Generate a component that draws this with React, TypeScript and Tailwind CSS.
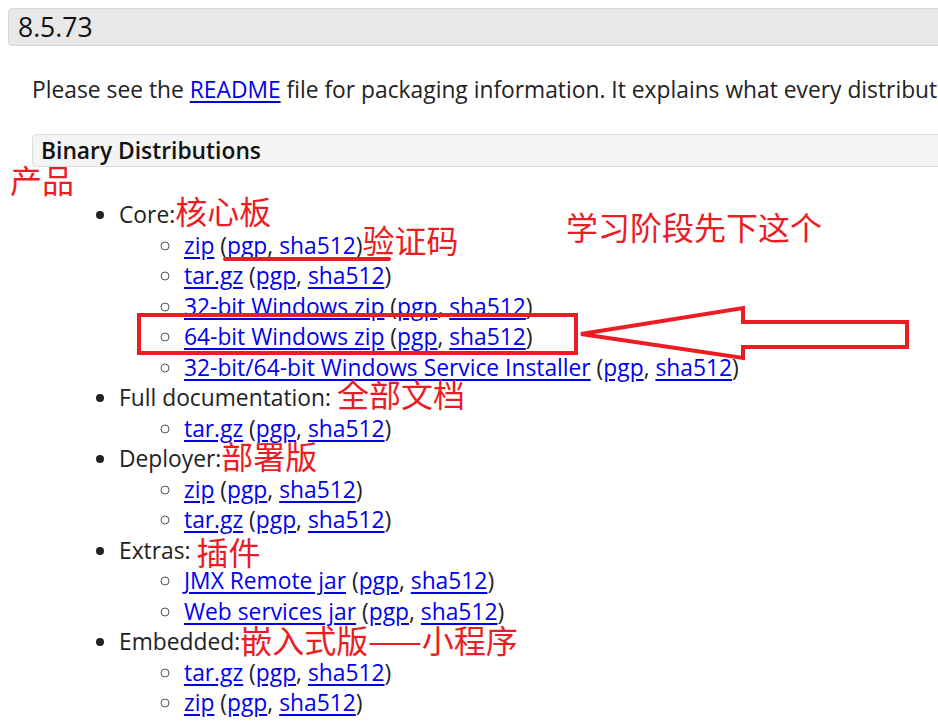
import type { ReactNode } from "react";

type Item = { label: string; links: string[] };

const groups: Item[] = [
  { label: "Core:", links: ["zip", "tar.gz", "32-bit Windows zip", "64-bit Windows zip", "32-bit/64-bit Windows Service Installer"] },
  { label: "Full documentation: ", links: ["tar.gz"] },
  { label: "Deployer:", links: ["zip", "tar.gz"] },
  { label: "Extras: ", links: ["JMX Remote jar", "Web services jar"] },
  { label: "Embedded:", links: ["tar.gz", "zip"] },
];

// 红色批注，行高为 0，不撑开行
function Note({ children, className = "" }: { children: ReactNode; className?: string }) {
  return (
    <span
      className={`relative text-[32px] leading-[0] text-[#ec1c24] font-['Noto_Sans_CJK_SC',sans-serif] ${className}`}
    >
      {children}
    </span>
  );
}

const groupNotes: ReactNode[] = [
  <Note className="top-[1px]">核心板</Note>,
  <Note className="top-[1px]">全部文档</Note>,
  <Note className="top-[2px]">部署版</Note>,
  <Note className="top-[6px]">插件</Note>,
  <Note className="top-[3px]">嵌入式版——小程序</Note>,
];

function A({ children }: { children: ReactNode }) {
  return <a className="text-[#0000ee] underline underline-offset-[3px]">{children}</a>;
}

export default function App() {
  return (
    <div className="relative w-[938px] h-[728px] overflow-hidden bg-white text-[#222] font-['Open_Sans',sans-serif]">
      {/* 版本标题 */}
      <div className="mt-[8px] ml-[8px] -mr-[20px] h-[38px] border border-[#d6d6d6] bg-[#e8e8e8] rounded-[4px] pl-[9px] text-[26.5px] leading-[36px] font-medium text-[#111]">
        8.5.73
      </div>

      <div className="ml-[32px]">
        <p className="mt-[29px] text-[22.8px] leading-[30px] whitespace-nowrap">
          Please see the <A>README</A> file for packaging information. It explains what every distribution contains.
        </p>

        <div className="mt-[29px] -mr-[20px] h-[33px] border border-[#dcdcdc] bg-[#f4f4f4] rounded-[4px] pl-[8px] text-[22.8px] leading-[31px] font-semibold text-[#111]">
          Binary Distributions
        </div>

        <ul className="mt-[33px] pl-[87px] list-disc text-[22.8px] leading-[30.5px] whitespace-nowrap">
          {groups.map((g, gi) => (
            <li key={g.label}>
              {g.label}
              {groupNotes[gi]}
              <ul className="pl-[65px] list-[circle] marker:text-[#555]">
                {g.links.map((l, li) => (
                  <li key={l + li}>
                    <A>{l}</A> (<A>pgp</A>, <A>sha512</A>)
                    {gi === 0 && li === 0 && <Note className="-top-[1px]">验证码</Note>}
                  </li>
                ))}
              </ul>
            </li>
          ))}
        </ul>
      </div>

      {/* 浮在上面的批注 */}
      <div className="absolute left-[10px] top-[163px] text-[32px] leading-none text-[#ec1c24] font-['Noto_Sans_CJK_SC',sans-serif]">
        产品
      </div>
      <div className="absolute left-[566px] top-[210px] text-[32px] leading-none text-[#ec1c24] font-['Noto_Sans_CJK_SC',sans-serif] whitespace-nowrap">
        学习阶段先下这个
      </div>
      <div className="absolute left-[223px] top-[257px] w-[168px] h-[4px] rounded-full bg-[#ec1c24]" />
      <div className="absolute left-[137px] top-[313px] w-[441px] h-[42px] border-[4px] border-[#ec1c24]" />
      <svg className="absolute left-0 top-0" width="938" height="728" viewBox="0 0 938 728" fill="none">
        <path
          d="M581 334 L743 308 L743 322 L907 322 L907 347 L743 347 L743 358 Z"
          stroke="#ec1c24"
          strokeWidth="4"
          strokeLinejoin="miter"
        />
      </svg>
    </div>
  );
}
